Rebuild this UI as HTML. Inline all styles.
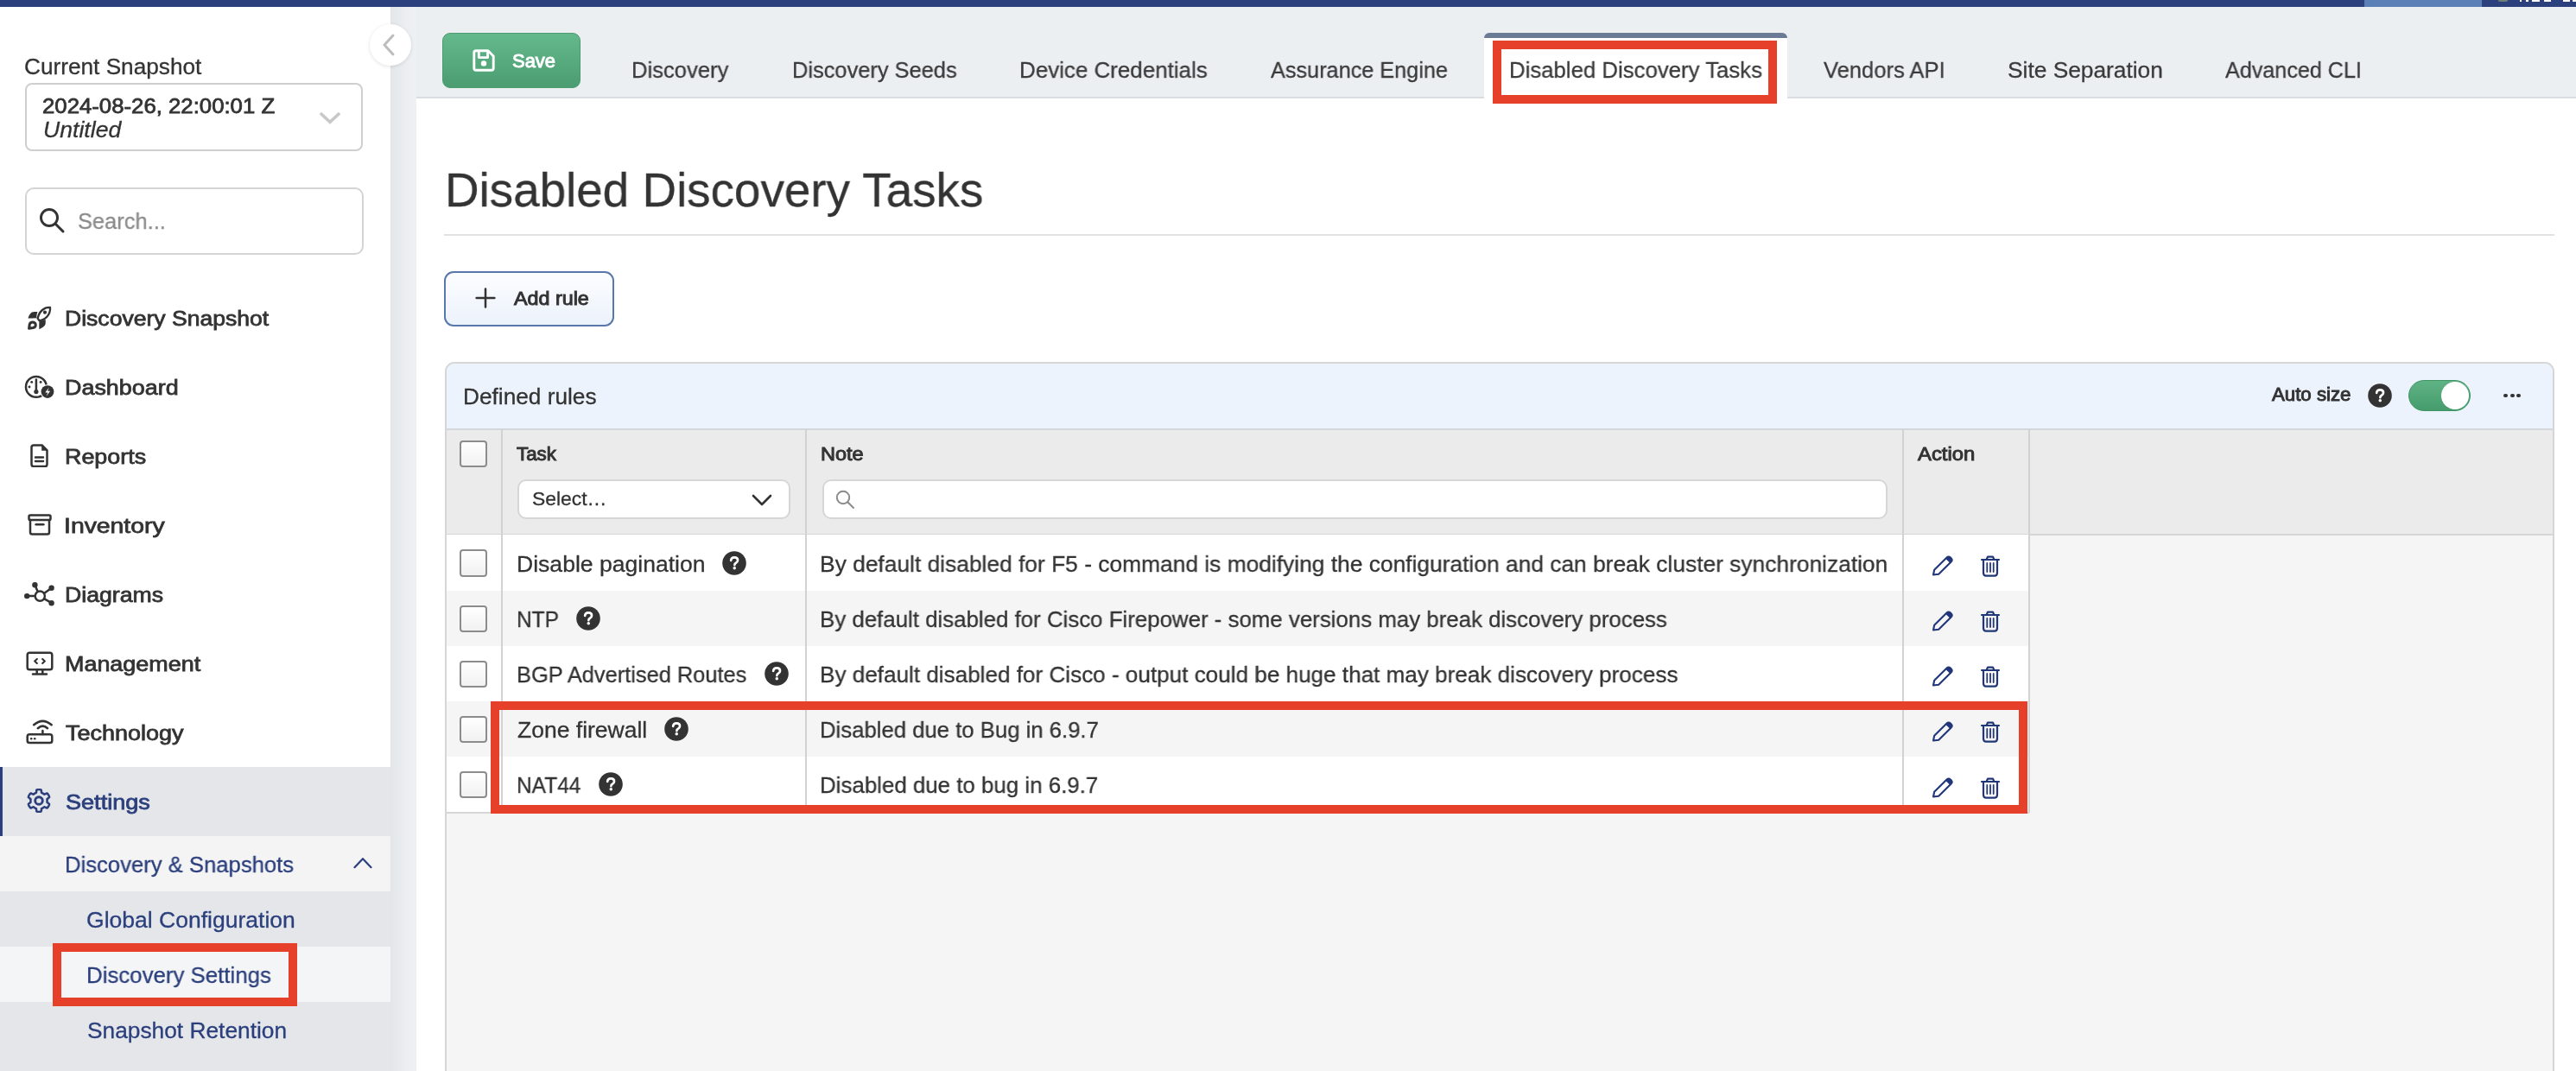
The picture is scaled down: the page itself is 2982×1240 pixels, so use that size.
<!DOCTYPE html>
<html><head><meta charset="utf-8"><title>Disabled Discovery Tasks</title>
<style>
html,body{margin:0;padding:0;}
body{width:2982px;height:1240px;position:relative;overflow:hidden;background:#eceff2;font-family:"Liberation Sans",sans-serif;}
.t{position:absolute;white-space:nowrap;line-height:1;transform-origin:0 0;will-change:transform;-webkit-text-stroke-width:0.3px;}
</style></head><body>
<div style="position:absolute;left:0.00px;top:0.00px;width:2982.00px;height:8.00px;background:#2c407d;"></div>
<div style="position:absolute;left:2737.00px;top:0.00px;width:136.00px;height:8.00px;background:#5b80b8;"></div>
<div style="position:absolute;left:0.00px;top:8.00px;width:452.00px;height:1232.00px;background:#ffffff;"></div>
<div style="position:absolute;left:0.00px;top:888.00px;width:452.00px;height:80.00px;background:#e4e6ea;"></div>
<div style="position:absolute;left:0.00px;top:888.00px;width:3.00px;height:80.00px;background:#2b3f7c;"></div>
<div style="position:absolute;left:0.00px;top:968.00px;width:452.00px;height:63.70px;background:#f4f4f5;"></div>
<div style="position:absolute;left:0.00px;top:1031.70px;width:452.00px;height:64.60px;background:#e4e6ea;"></div>
<div style="position:absolute;left:0.00px;top:1096.30px;width:452.00px;height:63.50px;background:#f4f5f6;"></div>
<div style="position:absolute;left:0.00px;top:1159.80px;width:452.00px;height:80.20px;background:#e4e6ea;"></div>
<div style="position:absolute;left:452.00px;top:8.00px;width:30.00px;height:1232.00px;background:linear-gradient(90deg,#e3e6e9,#eceff2 60%,#eef0f2);"></div>
<div style="position:absolute;left:482.00px;top:113.00px;width:2500.00px;height:1127.00px;background:#ffffff;"></div>
<div style="position:absolute;left:482.00px;top:112.00px;width:2500.00px;height:2.00px;background:#d9dce0;"></div>
<div class="t" style="left:27.76px;top:63.57px;font-size:26.16px;color:#333333;transform:scaleX(1.0017);">Current Snapshot</div>
<div style="position:absolute;left:28.50px;top:96.40px;width:391.00px;height:78.60px;box-sizing:border-box;border:2px solid #cfcfcf;border-radius:8px;background:#fff;"></div>
<div class="t" style="left:49.31px;top:110.55px;font-size:24.71px;-webkit-text-stroke:0.8px #333333;color:#333333;transform:scaleX(1.0423);">2024-08-26, 22:00:01 Z</div>
<div class="t" style="left:50.00px;top:137.61px;font-size:25.87px;font-style:italic;color:#333333;transform:scaleX(1.0292);">Untitled</div>
<svg style="position:absolute;left:369.00px;top:129.00px;" width="26.00" height="16.00" viewBox="0 0 26 16"><path d="M3.2 3.2 L13 12.4 L22.8 3.2" fill="none" stroke="#c8c8c8" stroke-width="3.6" stroke-linecap="square" stroke-linejoin="miter"/></svg>
<div style="position:absolute;left:29.00px;top:217.00px;width:392.00px;height:78.00px;box-sizing:border-box;border:2px solid #d4d4d4;border-radius:10px;background:#fff;"></div>
<svg style="position:absolute;left:44.00px;top:239.00px;" width="32.00" height="32.00" viewBox="0 0 32 32"><circle cx="13" cy="13" r="9.5" fill="none" stroke="#333" stroke-width="3"/><path d="M20 20 L29 29" stroke="#333" stroke-width="3" stroke-linecap="round"/></svg>
<div class="t" style="left:90.06px;top:243.34px;font-size:26.02px;color:#8c8c8c;transform:scaleX(0.9776);">Search...</div>
<div class="t" style="left:74.81px;top:356.99px;font-size:24.42px;-webkit-text-stroke:0.8px #333333;color:#333333;transform:scaleX(1.0885);">Discovery Snapshot</div>
<div class="t" style="left:74.78px;top:436.99px;font-size:24.42px;-webkit-text-stroke:0.8px #333333;color:#333333;transform:scaleX(1.1021);">Dashboard</div>
<div class="t" style="left:74.78px;top:516.99px;font-size:24.42px;-webkit-text-stroke:0.8px #333333;color:#333333;transform:scaleX(1.1017);">Reports</div>
<div class="t" style="left:74.38px;top:596.99px;font-size:24.42px;-webkit-text-stroke:0.8px #333333;color:#333333;transform:scaleX(1.1617);">Inventory</div>
<div class="t" style="left:74.80px;top:676.99px;font-size:24.42px;-webkit-text-stroke:0.8px #333333;color:#333333;transform:scaleX(1.0927);">Diagrams</div>
<div class="t" style="left:74.78px;top:756.99px;font-size:24.42px;-webkit-text-stroke:0.8px #333333;color:#333333;transform:scaleX(1.1030);">Management</div>
<div class="t" style="left:76.39px;top:836.99px;font-size:24.42px;-webkit-text-stroke:0.8px #333333;color:#333333;transform:scaleX(1.1064);">Technology</div>
<div class="t" style="left:75.78px;top:916.99px;font-size:24.42px;-webkit-text-stroke:0.8px #2b3f7c;color:#2b3f7c;transform:scaleX(1.1095);">Settings</div>
<div class="t" style="left:75.38px;top:987.57px;font-size:26.16px;color:#2b3f7c;transform:scaleX(0.9804);">Discovery &amp; Snapshots</div>
<svg style="position:absolute;left:409.00px;top:992.00px;" width="22.00" height="14.00" viewBox="0 0 22 14"><path d="M1.5 12.2 L11 2.2 L20.5 12.2" fill="none" stroke="#2b3f7c" stroke-width="2.2" stroke-linecap="round" stroke-linejoin="round"/></svg>
<div class="t" style="left:100.47px;top:1051.57px;font-size:26.16px;color:#2b3f7c;transform:scaleX(1.0140);">Global Configuration</div>
<div class="t" style="left:99.87px;top:1115.57px;font-size:26.16px;color:#2b3f7c;transform:scaleX(0.9876);">Discovery Settings</div>
<div class="t" style="left:100.62px;top:1179.57px;font-size:26.16px;color:#2b3f7c;transform:scaleX(1.0056);">Snapshot Retention</div>
<div style="position:absolute;left:61.00px;top:1092.00px;width:283.00px;height:72.60px;box-sizing:border-box;border:10px solid #e6402a;"></div>
<div style="position:absolute;left:428.00px;top:28.00px;width:48.00px;height:48.00px;border-radius:50%;background:#fff;box-shadow:0 1px 4px rgba(0,0,0,0.12);"></div>
<svg style="position:absolute;left:440.00px;top:38.00px;" width="22.00" height="28.00" viewBox="0 0 22 28"><path d="M15 3 L5 14 L15 25" fill="none" stroke="#bdbdbd" stroke-width="3" stroke-linecap="round" stroke-linejoin="round"/></svg>
<div style="position:absolute;left:512.20px;top:37.90px;width:159.80px;height:64.00px;box-sizing:border-box;border:1px solid #4c9c70;border-radius:9px;background:linear-gradient(#64b98c,#4b9d71);"></div>
<div class="t" style="left:592.71px;top:59.76px;font-size:21.73px;-webkit-text-stroke:0.95px #ffffff;color:#ffffff;transform:scaleX(1.0108);">Save</div>
<div style="position:absolute;left:1718.00px;top:38.00px;width:351.00px;height:76.00px;background:#fff;border-radius:8px 8px 0 0;"></div>
<div style="position:absolute;left:1718.00px;top:38.00px;width:351.00px;height:6.00px;background:#6b7b96;border-radius:8px 8px 0 0;"></div>
<div class="t" style="left:730.89px;top:67.57px;font-size:26.16px;color:#3b3b3b;transform:scaleX(0.9784);">Discovery</div>
<div class="t" style="left:916.90px;top:67.57px;font-size:26.16px;color:#3b3b3b;transform:scaleX(0.9716);">Discovery Seeds</div>
<div class="t" style="left:1179.66px;top:67.57px;font-size:26.16px;color:#3b3b3b;transform:scaleX(0.9918);">Device Credentials</div>
<div class="t" style="left:1471.34px;top:67.57px;font-size:26.16px;color:#3b3b3b;transform:scaleX(0.9654);">Assurance Engine</div>
<div class="t" style="left:1746.87px;top:67.57px;font-size:26.16px;color:#3b3b3b;transform:scaleX(0.9847);">Disabled Discovery Tasks</div>
<div class="t" style="left:2111.37px;top:67.57px;font-size:26.16px;color:#3b3b3b;transform:scaleX(0.9768);">Vendors API</div>
<div class="t" style="left:2323.82px;top:67.57px;font-size:26.16px;color:#3b3b3b;transform:scaleX(1.0056);">Site Separation</div>
<div class="t" style="left:2576.34px;top:67.57px;font-size:26.16px;color:#3b3b3b;transform:scaleX(0.9612);">Advanced CLI</div>
<div style="position:absolute;left:1727.60px;top:46.60px;width:329.20px;height:73.70px;box-sizing:border-box;border:10px solid #e6402a;"></div>
<div class="t" style="left:514.68px;top:192.22px;font-size:56.25px;color:#333333;transform:scaleX(0.9742);">Disabled Discovery Tasks</div>
<div style="position:absolute;left:514.00px;top:271.00px;width:2443.00px;height:2.00px;background:#e2e2e2;"></div>
<div style="position:absolute;left:513.80px;top:313.80px;width:197.00px;height:64.00px;box-sizing:border-box;border:2px solid #5877aa;border-radius:11px;background:linear-gradient(#fcfdff,#ecf2fb);"></div>
<svg style="position:absolute;left:548.50px;top:332.20px;" width="26.00" height="26.00" viewBox="0 0 26 26"><path d="M13 2.6 V23.4 M2.6 13 H23.4" stroke="#333" stroke-width="2.5" stroke-linecap="round"/></svg>
<div class="t" style="left:594.94px;top:335.61px;font-size:21.44px;-webkit-text-stroke:0.95px #333333;color:#333333;transform:scaleX(1.0870);">Add rule</div>
<div style="position:absolute;left:514.50px;top:418.70px;width:2442.50px;height:841.30px;box-sizing:border-box;border:2px solid #d6d6d6;border-radius:11px 11px 0 0;background:#f5f5f5;overflow:hidden;"></div>
<div style="position:absolute;left:516.50px;top:420.70px;width:2438.50px;height:75.30px;background:#ecf3fc;border-radius:9px 9px 0 0;"></div>
<div class="t" style="left:536.04px;top:445.64px;font-size:26.02px;color:#333333;transform:scaleX(1.0079);">Defined rules</div>
<div class="t" style="left:2629.54px;top:447.31px;font-size:21.44px;-webkit-text-stroke:0.95px #333333;color:#333333;transform:scaleX(1.0370);">Auto size</div>
<div style="position:absolute;left:2788.00px;top:440.10px;width:71.80px;height:35.60px;box-sizing:border-box;border-radius:18px;background:linear-gradient(#5fb284,#469c6c);border:1.5px solid #3f9463;"></div>
<div style="position:absolute;left:2826.00px;top:442.00px;width:32.00px;height:32.00px;border-radius:50%;background:#fff;"></div>
<div style="position:absolute;left:2898.30px;top:455.60px;width:4.80px;height:4.80px;border-radius:50%;background:#333;"></div>
<div style="position:absolute;left:2905.80px;top:455.60px;width:4.80px;height:4.80px;border-radius:50%;background:#333;"></div>
<div style="position:absolute;left:2913.30px;top:455.60px;width:4.80px;height:4.80px;border-radius:50%;background:#333;"></div>
<div style="position:absolute;left:516.50px;top:496.00px;width:2438.50px;height:123.00px;background:#ecebec;"></div>
<div style="position:absolute;left:516.50px;top:495.80px;width:2438.50px;height:2.00px;background:#d3d6da;"></div>
<div style="position:absolute;left:516.50px;top:618.00px;width:2438.50px;height:2.00px;background:#d6d6d6;"></div>
<div style="position:absolute;left:516.50px;top:619.00px;width:1832.50px;height:64.50px;background:#ffffff;"></div>
<div style="position:absolute;left:516.50px;top:683.50px;width:1832.50px;height:64.40px;background:#f5f5f5;"></div>
<div style="position:absolute;left:516.50px;top:747.90px;width:1832.50px;height:64.10px;background:#ffffff;"></div>
<div style="position:absolute;left:516.50px;top:812.00px;width:1832.50px;height:63.70px;background:#f5f5f5;"></div>
<div style="position:absolute;left:516.50px;top:875.70px;width:1832.50px;height:64.50px;background:#ffffff;"></div>
<div style="position:absolute;left:516.50px;top:939.50px;width:1832.50px;height:2.00px;background:#d6d6d6;"></div>
<div style="position:absolute;left:580.00px;top:497.00px;width:2.00px;height:443.50px;background:#d2d2d2;"></div>
<div style="position:absolute;left:931.70px;top:497.00px;width:2.00px;height:443.50px;background:#d2d2d2;"></div>
<div style="position:absolute;left:2201.70px;top:497.00px;width:2.00px;height:443.50px;background:#d2d2d2;"></div>
<div style="position:absolute;left:2348.00px;top:497.00px;width:2.00px;height:443.50px;background:#d2d2d2;"></div>
<div class="t" style="left:598.20px;top:515.61px;font-size:21.44px;-webkit-text-stroke:0.95px #333333;color:#333333;transform:scaleX(1.0429);">Task</div>
<div class="t" style="left:949.56px;top:515.61px;font-size:21.44px;-webkit-text-stroke:0.95px #333333;color:#333333;transform:scaleX(1.0974);">Note</div>
<div class="t" style="left:2220.14px;top:515.61px;font-size:21.44px;-webkit-text-stroke:0.95px #333333;color:#333333;transform:scaleX(1.1126);">Action</div>
<div style="position:absolute;left:599.20px;top:555.20px;width:315.60px;height:45.80px;box-sizing:border-box;border:2px solid #d6d6d6;border-radius:10px;background:#fff;"></div>
<div class="t" style="left:615.67px;top:567.30px;font-size:22.09px;color:#333333;transform:scaleX(1.0364);">Select…</div>
<svg style="position:absolute;left:869.00px;top:571.00px;" width="26.00" height="16.00" viewBox="0 0 26 16"><path d="M3 3 L13 13 L23 3" fill="none" stroke="#333" stroke-width="2.6" stroke-linecap="round" stroke-linejoin="round"/></svg>
<div style="position:absolute;left:951.50px;top:555.20px;width:1233.00px;height:45.80px;box-sizing:border-box;border:2px solid #d6d6d6;border-radius:10px;background:#fff;"></div>
<svg style="position:absolute;left:966.00px;top:566.00px;" width="24.00" height="24.00" viewBox="0 0 24 24"><circle cx="10" cy="10" r="7.2" fill="none" stroke="#8a8a8a" stroke-width="2"/><path d="M15.5 15.5 L22 22" stroke="#8a8a8a" stroke-width="2" stroke-linecap="round"/></svg>
<div style="position:absolute;left:532.20px;top:510.30px;width:31.50px;height:31.20px;box-sizing:border-box;border:2px solid #8c8c8c;border-radius:4px;background:linear-gradient(#ffffff,#f1f1f1);"></div>
<div style="position:absolute;left:532.20px;top:636.40px;width:31.50px;height:31.20px;box-sizing:border-box;border:2px solid #8c8c8c;border-radius:4px;background:linear-gradient(#ffffff,#f1f1f1);"></div>
<div class="t" style="left:598.01px;top:640.02px;font-size:26.45px;color:#333333;transform:scaleX(1.0048);">Disable pagination</div>
<svg style="position:absolute;left:836.00px;top:637.60px;" width="28.00" height="28.00" viewBox="0 0 28 28"><circle cx="14" cy="14" r="13.8" fill="#333"/><g transform="translate(14 13.6) scale(0.88) translate(-14 -13.6)"><path d="M9.6 10.6 C9.8 7.8 11.7 6.6 14.2 6.6 C16.9 6.6 18.6 8.2 18.6 10.3 C18.6 12.4 17 13.3 15.7 14.2 C14.8 14.8 14.4 15.4 14.4 16.6" fill="none" stroke="#fff" stroke-width="3" stroke-linecap="round"/><circle cx="14.3" cy="20.6" r="2" fill="#fff"/></g></svg>
<div class="t" style="left:949.32px;top:640.02px;font-size:26.45px;color:#333333;transform:scaleX(0.9968);">By default disabled for F5 - command is modifying the configuration and can break cluster synchronization</div>
<svg style="position:absolute;left:2235.00px;top:642.00px;" width="27.00" height="26.00" viewBox="0 0 27 26"><path d="M3 23.5 L4.2 17.8 L18.6 3.4 C19.8 2.2 21.6 2.2 22.8 3.4 L23.6 4.2 C24.8 5.4 24.8 7.2 23.6 8.4 L9.2 22.8 Z" fill="none" stroke="#22367a" stroke-width="2.1" stroke-linejoin="round"/><path d="M17.2 4.8 L18.6 3.4 C19.8 2.2 21.6 2.2 22.8 3.4 L23.6 4.2 C24.8 5.4 24.8 7.2 23.6 8.4 L22.2 9.8 Z" fill="#22367a"/></svg>
<svg style="position:absolute;left:2292.00px;top:642.00px;" width="24.00" height="26.00" viewBox="0 0 24 26"><path d="M2 6 H22" stroke="#22367a" stroke-width="2.2" stroke-linecap="round"/><path d="M7.5 6 L9 2.6 H15 L16.5 6" fill="none" stroke="#22367a" stroke-width="2.2" stroke-linejoin="round"/><path d="M4 6 V21 C4 23 5 24.6 7 24.6 H17 C19 24.6 20 23 20 21 V6" fill="none" stroke="#22367a" stroke-width="2.2"/><path d="M8.3 10 V20 M12 10 V20 M15.7 10 V20" stroke="#22367a" stroke-width="1.8" stroke-linecap="round"/></svg>
<div style="position:absolute;left:532.20px;top:700.55px;width:31.50px;height:31.20px;box-sizing:border-box;border:2px solid #8c8c8c;border-radius:4px;background:linear-gradient(#ffffff,#f1f1f1);"></div>
<div class="t" style="left:598.18px;top:704.12px;font-size:26.45px;color:#333333;transform:scaleX(0.9263);">NTP</div>
<svg style="position:absolute;left:666.90px;top:701.75px;" width="28.00" height="28.00" viewBox="0 0 28 28"><circle cx="14" cy="14" r="13.8" fill="#333"/><g transform="translate(14 13.6) scale(0.88) translate(-14 -13.6)"><path d="M9.6 10.6 C9.8 7.8 11.7 6.6 14.2 6.6 C16.9 6.6 18.6 8.2 18.6 10.3 C18.6 12.4 17 13.3 15.7 14.2 C14.8 14.8 14.4 15.4 14.4 16.6" fill="none" stroke="#fff" stroke-width="3" stroke-linecap="round"/><circle cx="14.3" cy="20.6" r="2" fill="#fff"/></g></svg>
<div class="t" style="left:949.37px;top:704.12px;font-size:26.45px;color:#333333;transform:scaleX(0.9774);">By default disabled for Cisco Firepower - some versions may break discovery process</div>
<svg style="position:absolute;left:2235.00px;top:706.15px;" width="27.00" height="26.00" viewBox="0 0 27 26"><path d="M3 23.5 L4.2 17.8 L18.6 3.4 C19.8 2.2 21.6 2.2 22.8 3.4 L23.6 4.2 C24.8 5.4 24.8 7.2 23.6 8.4 L9.2 22.8 Z" fill="none" stroke="#22367a" stroke-width="2.1" stroke-linejoin="round"/><path d="M17.2 4.8 L18.6 3.4 C19.8 2.2 21.6 2.2 22.8 3.4 L23.6 4.2 C24.8 5.4 24.8 7.2 23.6 8.4 L22.2 9.8 Z" fill="#22367a"/></svg>
<svg style="position:absolute;left:2292.00px;top:706.15px;" width="24.00" height="26.00" viewBox="0 0 24 26"><path d="M2 6 H22" stroke="#22367a" stroke-width="2.2" stroke-linecap="round"/><path d="M7.5 6 L9 2.6 H15 L16.5 6" fill="none" stroke="#22367a" stroke-width="2.2" stroke-linejoin="round"/><path d="M4 6 V21 C4 23 5 24.6 7 24.6 H17 C19 24.6 20 23 20 21 V6" fill="none" stroke="#22367a" stroke-width="2.2"/><path d="M8.3 10 V20 M12 10 V20 M15.7 10 V20" stroke="#22367a" stroke-width="1.8" stroke-linecap="round"/></svg>
<div style="position:absolute;left:532.20px;top:764.70px;width:31.50px;height:31.20px;box-sizing:border-box;border:2px solid #8c8c8c;border-radius:4px;background:linear-gradient(#ffffff,#f1f1f1);"></div>
<div class="t" style="left:598.10px;top:768.22px;font-size:26.45px;color:#333333;transform:scaleX(0.9607);">BGP Advertised Routes</div>
<svg style="position:absolute;left:884.70px;top:765.90px;" width="28.00" height="28.00" viewBox="0 0 28 28"><circle cx="14" cy="14" r="13.8" fill="#333"/><g transform="translate(14 13.6) scale(0.88) translate(-14 -13.6)"><path d="M9.6 10.6 C9.8 7.8 11.7 6.6 14.2 6.6 C16.9 6.6 18.6 8.2 18.6 10.3 C18.6 12.4 17 13.3 15.7 14.2 C14.8 14.8 14.4 15.4 14.4 16.6" fill="none" stroke="#fff" stroke-width="3" stroke-linecap="round"/><circle cx="14.3" cy="20.6" r="2" fill="#fff"/></g></svg>
<div class="t" style="left:949.35px;top:768.22px;font-size:26.45px;color:#333333;transform:scaleX(0.9869);">By default disabled for Cisco - output could be huge that may break discovery process</div>
<svg style="position:absolute;left:2235.00px;top:770.30px;" width="27.00" height="26.00" viewBox="0 0 27 26"><path d="M3 23.5 L4.2 17.8 L18.6 3.4 C19.8 2.2 21.6 2.2 22.8 3.4 L23.6 4.2 C24.8 5.4 24.8 7.2 23.6 8.4 L9.2 22.8 Z" fill="none" stroke="#22367a" stroke-width="2.1" stroke-linejoin="round"/><path d="M17.2 4.8 L18.6 3.4 C19.8 2.2 21.6 2.2 22.8 3.4 L23.6 4.2 C24.8 5.4 24.8 7.2 23.6 8.4 L22.2 9.8 Z" fill="#22367a"/></svg>
<svg style="position:absolute;left:2292.00px;top:770.30px;" width="24.00" height="26.00" viewBox="0 0 24 26"><path d="M2 6 H22" stroke="#22367a" stroke-width="2.2" stroke-linecap="round"/><path d="M7.5 6 L9 2.6 H15 L16.5 6" fill="none" stroke="#22367a" stroke-width="2.2" stroke-linejoin="round"/><path d="M4 6 V21 C4 23 5 24.6 7 24.6 H17 C19 24.6 20 23 20 21 V6" fill="none" stroke="#22367a" stroke-width="2.2"/><path d="M8.3 10 V20 M12 10 V20 M15.7 10 V20" stroke="#22367a" stroke-width="1.8" stroke-linecap="round"/></svg>
<div style="position:absolute;left:532.20px;top:828.85px;width:31.50px;height:31.20px;box-sizing:border-box;border:2px solid #8c8c8c;border-radius:4px;background:linear-gradient(#ffffff,#f1f1f1);"></div>
<div class="t" style="left:599.37px;top:832.32px;font-size:26.45px;color:#333333;transform:scaleX(1.0024);">Zone firewall</div>
<svg style="position:absolute;left:768.90px;top:830.05px;" width="28.00" height="28.00" viewBox="0 0 28 28"><circle cx="14" cy="14" r="13.8" fill="#333"/><g transform="translate(14 13.6) scale(0.88) translate(-14 -13.6)"><path d="M9.6 10.6 C9.8 7.8 11.7 6.6 14.2 6.6 C16.9 6.6 18.6 8.2 18.6 10.3 C18.6 12.4 17 13.3 15.7 14.2 C14.8 14.8 14.4 15.4 14.4 16.6" fill="none" stroke="#fff" stroke-width="3" stroke-linecap="round"/><circle cx="14.3" cy="20.6" r="2" fill="#fff"/></g></svg>
<div class="t" style="left:949.38px;top:832.32px;font-size:26.45px;color:#333333;transform:scaleX(0.9721);">Disabled due to Bug in 6.9.7</div>
<svg style="position:absolute;left:2235.00px;top:834.45px;" width="27.00" height="26.00" viewBox="0 0 27 26"><path d="M3 23.5 L4.2 17.8 L18.6 3.4 C19.8 2.2 21.6 2.2 22.8 3.4 L23.6 4.2 C24.8 5.4 24.8 7.2 23.6 8.4 L9.2 22.8 Z" fill="none" stroke="#22367a" stroke-width="2.1" stroke-linejoin="round"/><path d="M17.2 4.8 L18.6 3.4 C19.8 2.2 21.6 2.2 22.8 3.4 L23.6 4.2 C24.8 5.4 24.8 7.2 23.6 8.4 L22.2 9.8 Z" fill="#22367a"/></svg>
<svg style="position:absolute;left:2292.00px;top:834.45px;" width="24.00" height="26.00" viewBox="0 0 24 26"><path d="M2 6 H22" stroke="#22367a" stroke-width="2.2" stroke-linecap="round"/><path d="M7.5 6 L9 2.6 H15 L16.5 6" fill="none" stroke="#22367a" stroke-width="2.2" stroke-linejoin="round"/><path d="M4 6 V21 C4 23 5 24.6 7 24.6 H17 C19 24.6 20 23 20 21 V6" fill="none" stroke="#22367a" stroke-width="2.2"/><path d="M8.3 10 V20 M12 10 V20 M15.7 10 V20" stroke="#22367a" stroke-width="1.8" stroke-linecap="round"/></svg>
<div style="position:absolute;left:532.20px;top:893.00px;width:31.50px;height:31.20px;box-sizing:border-box;border:2px solid #8c8c8c;border-radius:4px;background:linear-gradient(#ffffff,#f1f1f1);"></div>
<div class="t" style="left:598.18px;top:896.42px;font-size:26.45px;color:#333333;transform:scaleX(0.9271);">NAT44</div>
<svg style="position:absolute;left:693.00px;top:894.20px;" width="28.00" height="28.00" viewBox="0 0 28 28"><circle cx="14" cy="14" r="13.8" fill="#333"/><g transform="translate(14 13.6) scale(0.88) translate(-14 -13.6)"><path d="M9.6 10.6 C9.8 7.8 11.7 6.6 14.2 6.6 C16.9 6.6 18.6 8.2 18.6 10.3 C18.6 12.4 17 13.3 15.7 14.2 C14.8 14.8 14.4 15.4 14.4 16.6" fill="none" stroke="#fff" stroke-width="3" stroke-linecap="round"/><circle cx="14.3" cy="20.6" r="2" fill="#fff"/></g></svg>
<div class="t" style="left:949.36px;top:896.42px;font-size:26.45px;color:#333333;transform:scaleX(0.9787);">Disabled due to bug in 6.9.7</div>
<svg style="position:absolute;left:2235.00px;top:898.60px;" width="27.00" height="26.00" viewBox="0 0 27 26"><path d="M3 23.5 L4.2 17.8 L18.6 3.4 C19.8 2.2 21.6 2.2 22.8 3.4 L23.6 4.2 C24.8 5.4 24.8 7.2 23.6 8.4 L9.2 22.8 Z" fill="none" stroke="#22367a" stroke-width="2.1" stroke-linejoin="round"/><path d="M17.2 4.8 L18.6 3.4 C19.8 2.2 21.6 2.2 22.8 3.4 L23.6 4.2 C24.8 5.4 24.8 7.2 23.6 8.4 L22.2 9.8 Z" fill="#22367a"/></svg>
<svg style="position:absolute;left:2292.00px;top:898.60px;" width="24.00" height="26.00" viewBox="0 0 24 26"><path d="M2 6 H22" stroke="#22367a" stroke-width="2.2" stroke-linecap="round"/><path d="M7.5 6 L9 2.6 H15 L16.5 6" fill="none" stroke="#22367a" stroke-width="2.2" stroke-linejoin="round"/><path d="M4 6 V21 C4 23 5 24.6 7 24.6 H17 C19 24.6 20 23 20 21 V6" fill="none" stroke="#22367a" stroke-width="2.2"/><path d="M8.3 10 V20 M12 10 V20 M15.7 10 V20" stroke="#22367a" stroke-width="1.8" stroke-linecap="round"/></svg>
<svg style="position:absolute;left:2740.70px;top:443.70px;" width="28.00" height="28.00" viewBox="0 0 28 28"><circle cx="14" cy="14" r="13.8" fill="#333"/><g transform="translate(14 13.6) scale(0.88) translate(-14 -13.6)"><path d="M9.6 10.6 C9.8 7.8 11.7 6.6 14.2 6.6 C16.9 6.6 18.6 8.2 18.6 10.3 C18.6 12.4 17 13.3 15.7 14.2 C14.8 14.8 14.4 15.4 14.4 16.6" fill="none" stroke="#fff" stroke-width="3" stroke-linecap="round"/><circle cx="14.3" cy="20.6" r="2" fill="#fff"/></g></svg>
<div style="position:absolute;left:568.20px;top:812.00px;width:1779.10px;height:129.60px;box-sizing:border-box;border:10px solid #e6402a;"></div>
<svg style="position:absolute;left:31.50px;top:353.60px;" width="28.00" height="28.00" viewBox="0 0 28 28"><path d="M11.6 14.6 C12.6 9.2 15.6 5 20.6 2.6 C22.4 1.9 24.2 1.7 26 1.8 C26.2 4 26 6.2 25.2 8.2 C23.8 12 20.8 14.9 17 16.4 C16 16.8 14.8 17.1 13.6 17.2 Z" fill="none" stroke="#333333" stroke-width="2.3" stroke-linejoin="round"/><circle cx="20" cy="7.7" r="2.1" fill="#333333"/><path d="M0.5 14.6 C1.2 12 2.6 9.6 4.2 8.1 C5.6 7 8 6.9 11.4 7.1 C10.6 9.2 10.3 11.6 10.4 14.3 C7 14.4 3.6 14.5 0.5 14.6 Z" fill="#333333"/><path d="M13.4 17.9 C15.8 17.6 18.2 16.9 20.6 15.7 C20.9 18 20.9 20 20.5 21.8 C19.6 24 16.6 25.8 13.4 27.3 C13.2 24.3 13.2 21 13.4 17.9 Z" fill="#333333"/><path d="M1.6 26.2 L2.2 21.8 C2.6 19.8 4 18.9 5.8 18.9 C7.7 18.9 9.3 20.4 9.3 22.2 C9.3 24 7.9 25.3 6.1 25.6 Z" fill="none" stroke="#333333" stroke-width="3" stroke-linejoin="round"/></svg>
<svg style="position:absolute;left:28.00px;top:433.50px;" width="35.00" height="28.00" viewBox="0 0 35 28"><circle cx="13.9" cy="13.9" r="11.9" fill="none" stroke="#333333" stroke-width="2.5"/><path d="M13.9 5.6 V18" stroke="#333333" stroke-width="2.5" stroke-linecap="round"/><circle cx="13.9" cy="19.6" r="2.6" fill="#333333"/><circle cx="8.7" cy="8.4" r="1.45" fill="#333333"/><circle cx="19.1" cy="8.4" r="1.45" fill="#333333"/><circle cx="6" cy="14" r="1.45" fill="#333333"/><circle cx="27" cy="19.6" r="8.4" fill="#fff"/><circle cx="27" cy="19.6" r="7.4" fill="#333333"/><path d="M28.8 14.6 L24.3 20.6 H27.3 L25.6 24.8 L30.1 18.8 H27.1 Z" fill="#fff"/></svg>
<svg style="position:absolute;left:35.00px;top:513.50px;" width="21.00" height="27.50" viewBox="0 0 21 27.5"><path d="M13.6 1.5 H4 C2.6 1.5 1.5 2.6 1.5 4 V23.6 C1.5 25 2.6 26.1 4 26.1 H17 C18.4 26.1 19.5 25 19.5 23.6 V7.4 Z" fill="none" stroke="#333333" stroke-width="2.5" stroke-linecap="round" stroke-linejoin="round"/><path d="M13.2 1.5 L19.5 7.8 H13.2 Z" fill="#333333"/><path d="M6 15.4 H15 M6 20 H15" stroke="#333333" stroke-width="2.5" stroke-linecap="round" stroke-linejoin="round"/></svg>
<svg style="position:absolute;left:31.50px;top:595.00px;" width="28.00" height="25.00" viewBox="0 0 28 25"><rect x="1.5" y="1.5" width="25" height="5.6" rx="1.6" fill="none" stroke="#333333" stroke-width="2.5" stroke-linecap="round" stroke-linejoin="round"/><path d="M3 7.1 V21.2 C3 22.5 4 23.5 5.3 23.5 H22.7 C24 23.5 25 22.5 25 21.2 V7.1" fill="none" stroke="#333333" stroke-width="2.5" stroke-linecap="round" stroke-linejoin="round"/><path d="M9.6 12.2 H18.4" stroke="#333333" stroke-width="2.5" stroke-linecap="round" stroke-linejoin="round"/></svg>
<svg style="position:absolute;left:28.00px;top:673.50px;" width="35.00" height="28.00" viewBox="0 0 35 28"><circle cx="18.3" cy="16.1" r="5.6" fill="none" stroke="#333333" stroke-width="2.5"/><path d="M12.4 3.2 L15.6 10.8 M31.7 6.7 L23.3 12.8 M31.7 24.2 L23.4 19.4 M3.1 16.1 L12.4 16.1" stroke="#333333" stroke-width="2.5"/><circle cx="12.4" cy="3.3" r="3.2" fill="#333333"/><circle cx="31.6" cy="6.7" r="3.2" fill="#333333"/><circle cx="31.6" cy="24.3" r="3.2" fill="#333333"/><circle cx="3.2" cy="16.1" r="3.2" fill="#333333"/></svg>
<svg style="position:absolute;left:29.50px;top:753.50px;" width="32.00" height="28.00" viewBox="0 0 32 28"><rect x="1.7" y="1.7" width="28.6" height="19.6" rx="2.6" fill="none" stroke="#333333" stroke-width="2.5" stroke-linecap="round" stroke-linejoin="round"/><path d="M12.8 9 L10.2 11.5 L12.8 14 M19.2 9 L21.8 11.5 L19.2 14" fill="none" stroke="#333333" stroke-width="2.1" stroke-linecap="round" stroke-linejoin="round"/><path d="M12.7 21.5 V26 M19.3 21.5 V26 M8 26.4 H24" stroke="#333333" stroke-width="2.5" stroke-linecap="round" stroke-linejoin="round"/></svg>
<svg style="position:absolute;left:29.50px;top:833.00px;" width="32.00" height="28.50" viewBox="0 0 32 28.5"><rect x="1.7" y="17.2" width="28.6" height="9.8" rx="2.6" fill="none" stroke="#333333" stroke-width="2.5" stroke-linecap="round" stroke-linejoin="round"/><circle cx="6.2" cy="22.3" r="1.3" fill="#333333"/><circle cx="10.2" cy="22.3" r="1.3" fill="#333333"/><path d="M19.4 13 V17" stroke="#333333" stroke-width="2.5" stroke-linecap="round" stroke-linejoin="round"/><path d="M9.2 6.2 Q19.4 -2.6 29.6 6.2" fill="none" stroke="#333333" stroke-width="2.6" stroke-linecap="round"/><path d="M13.8 10.2 Q19.4 5 25 10.2" fill="none" stroke="#333333" stroke-width="2.6" stroke-linecap="round"/></svg>
<svg style="position:absolute;left:31.10px;top:913.00px;" width="28.00" height="28.00" viewBox="0 0 28 28"><path d="M14.0 1.1 L14.7 1.1 L15.3 1.2 L16.0 1.3 L16.6 1.6 L16.9 3.1 L17.0 4.7 L17.4 5.0 L17.9 5.2 L18.4 5.4 L18.8 5.7 L19.2 5.9 L19.6 6.2 L20.0 6.5 L20.6 6.7 L22.0 6.0 L23.4 5.5 L24.0 5.9 L24.4 6.4 L24.8 7.0 L25.2 7.6 L25.5 8.1 L25.8 8.8 L26.0 9.4 L26.1 10.1 L24.9 11.1 L23.6 12.0 L23.5 12.5 L23.5 13.0 L23.6 13.5 L23.6 14.0 L23.6 14.5 L23.5 15.0 L23.5 15.5 L23.6 16.0 L24.9 16.9 L26.1 17.9 L26.0 18.6 L25.8 19.2 L25.5 19.9 L25.2 20.4 L24.8 21.0 L24.4 21.6 L24.0 22.1 L23.4 22.5 L22.0 22.0 L20.6 21.3 L20.0 21.5 L19.6 21.8 L19.2 22.1 L18.8 22.3 L18.4 22.6 L17.9 22.8 L17.4 23.0 L17.0 23.3 L16.9 24.9 L16.6 26.4 L16.0 26.7 L15.3 26.8 L14.7 26.9 L14.0 26.9 L13.3 26.9 L12.7 26.8 L12.0 26.7 L11.4 26.4 L11.1 24.9 L11.0 23.3 L10.6 23.0 L10.1 22.8 L9.6 22.6 L9.2 22.3 L8.8 22.1 L8.4 21.8 L8.0 21.5 L7.4 21.3 L6.0 22.0 L4.6 22.5 L4.0 22.1 L3.6 21.6 L3.2 21.0 L2.8 20.5 L2.5 19.9 L2.2 19.2 L2.0 18.6 L1.9 17.9 L3.1 16.9 L4.4 16.0 L4.5 15.5 L4.5 15.0 L4.4 14.5 L4.4 14.0 L4.4 13.5 L4.5 13.0 L4.5 12.5 L4.4 12.0 L3.1 11.1 L1.9 10.1 L2.0 9.4 L2.2 8.8 L2.5 8.1 L2.8 7.5 L3.2 7.0 L3.6 6.4 L4.0 5.9 L4.6 5.5 L6.0 6.0 L7.4 6.7 L8.0 6.5 L8.4 6.2 L8.8 5.9 L9.2 5.7 L9.6 5.4 L10.1 5.2 L10.6 5.0 L11.0 4.7 L11.1 3.1 L11.4 1.6 L12.0 1.3 L12.7 1.2 L13.3 1.1Z" fill="none" stroke="#2b3f7c" stroke-width="2.5" stroke-linejoin="round"/><circle cx="14" cy="14" r="4.3" fill="none" stroke="#2b3f7c" stroke-width="2.9"/></svg>
<svg style="position:absolute;left:546.50px;top:56.50px;" width="26.00" height="26.00" viewBox="0 0 26 26"><path d="M4 1.8 H18 L24.2 8 V22 C24.2 23.3 23.2 24.2 22 24.2 H4 C2.7 24.2 1.8 23.3 1.8 22 V4 C1.8 2.7 2.7 1.8 4 1.8 Z" fill="none" stroke="#fff" stroke-width="2.9" stroke-linejoin="round"/><path d="M7.3 2 V9.6 H17.6 V2" fill="none" stroke="#fff" stroke-width="2.9" stroke-linejoin="round"/><circle cx="13" cy="16.4" r="3.2" fill="#fff"/></svg>
<div style="position:absolute;left:2892.00px;top:0.00px;width:11.00px;height:2.20px;background:#6b7f74;border-radius:0 0 50% 50%;"></div>
<div style="position:absolute;left:2916.50px;top:0.00px;width:2.50px;height:2.20px;background:#fff;"></div>
<div style="position:absolute;left:2924.00px;top:0.00px;width:2.50px;height:2.20px;background:#fff;"></div>
<div style="position:absolute;left:2931.00px;top:0.00px;width:9.00px;height:2.20px;background:#fff;"></div>
<div style="position:absolute;left:2945.00px;top:0.00px;width:8.00px;height:2.20px;background:#fff;"></div>
<div style="position:absolute;left:2967.00px;top:0.00px;width:8.00px;height:2.20px;background:#fff;"></div>
<div style="position:absolute;left:2978.00px;top:0.00px;width:4.00px;height:2.20px;background:#fff;"></div>
</body></html>
